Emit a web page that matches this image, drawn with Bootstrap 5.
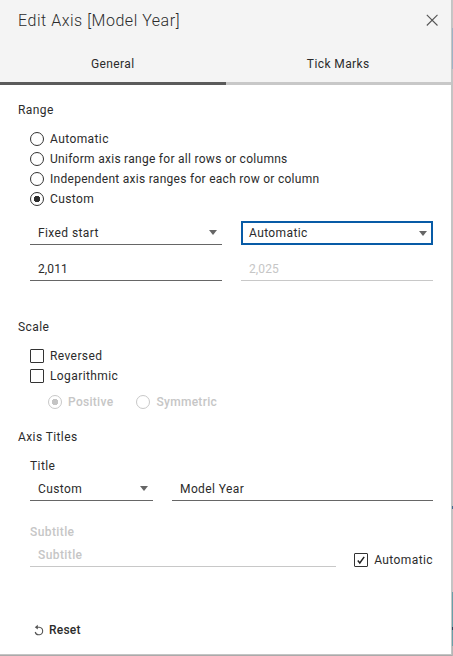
<!DOCTYPE html>
<html lang="en">
<head>
<meta charset="utf-8">
<meta name="viewport" content="width=device-width, initial-scale=1">
<title>Edit Axis [Model Year]</title>
<link href="https://cdn.jsdelivr.net/npm/bootstrap@5.3.0/dist/css/bootstrap.min.css" rel="stylesheet">
<style>
body{width:453px;height:656px;overflow:hidden;background:#c4c4c4;font:400 12px/20px Roboto,"Liberation Sans",sans-serif;letter-spacing:.4px;color:#2b2b2b}
.dialog{width:451px;height:654px;background:#fff}
.backdrop-edge{width:1px;height:656px;margin-left:1px;background:linear-gradient(#c6c6c6 0 28px,#9db3c5 28px 69px,#c4c4c4 69px 506px,#416d91 506px 509px,#c4c4c4 509px 592px,#68a0a9 592px 627px,#24445b 627px 630px,#68a0a9 630px 646px,#b5b5b5 646px)}
.frame{width:453px;height:656px;box-shadow:inset 0 -1px #aaa}
.head{height:85px;background:#f4f4f4}
.head-row{height:45px;padding:0 13px 0 18px}
.heading{font-size:16px;font-weight:300;line-height:20px;letter-spacing:.53px;margin:-4px 0 0}
.close-btn{width:12px;height:12px;margin-top:-5px}
.tab-pane-link{height:40px;border:0;border-bottom:3px solid #c8c8c8;border-radius:0;background:none;padding:0;color:#2b2b2b;letter-spacing:inherit}
.tab-pane-link.active{border-color:#5b5b5b}
.content{padding:15px 18px 0}
.inset{padding-left:12px}
.range-block{padding-top:9px}
.long-text{letter-spacing:.28px}
.form-check{min-height:20px;gap:6px}
.form-check-input{width:14px;height:14px;border:1px solid #333;background-color:#fff}
.form-check-input[type=checkbox]{border-radius:1px}
.form-check-input:checked{background-color:#fff;border-color:#333}
.form-check-input:checked[type=radio]{background-image:radial-gradient(circle,#2b2b2b 2.9px,transparent 3.5px)}
.form-check-input:checked[type=checkbox]{background-image:url("data:image/svg+xml,%3Csvg xmlns='http://www.w3.org/2000/svg' viewBox='0 0 12 12'%3E%3Cpath d='M2.8 6.6l2 2.4L9.2 2.9' fill='none' stroke='%23222' stroke-width='1.5'/%3E%3C/svg%3E")}
.off{color:#c6c6c6;font-weight:500}
.number .off{font-weight:400}
.form-check-input:disabled{opacity:1;border-color:#c8c8c8}
.form-check-input:checked:disabled[type=radio]{background-image:radial-gradient(circle,#c4c4c4 2.9px,transparent 3.5px)}
.form-check-input:disabled~.form-check-label{opacity:1}
.field{height:24px;border-bottom:1px solid #666;padding:0 5px 0 8px}
.field.off{border-color:#c8c8c8}
.field.focused{border:2px solid #085ba6;padding:0 4px 0 6px}
.number{letter-spacing:.1px}
.pair{column-gap:19px}
.scale{margin-top:36px}
.scale-block{padding-top:9px}
.log-kind{padding:6px 0 0 30px;column-gap:23px;letter-spacing:.3px}
.titles{margin-top:15px}
.title-caption{padding:9px 0 1px}
.w-kind{width:123px}.w-sub{width:306px}
.sub-caption{margin-bottom:1px}
.subtitle-row{margin-top:21px}
.auto-title{position:relative;top:3px}
.reset-btn{font-weight:500;border:0;padding:0;line-height:20px;gap:5px;letter-spacing:.2px;margin:53px 0 0 16px;color:#2b2b2b}
</style>
<script src="https://cdn.jsdelivr.net/npm/bootstrap@5.3.0/dist/js/bootstrap.bundle.min.js"></script>
</head>
<body>
<div class="frame d-flex">
<main class="dialog flex-shrink-0">
  <header class="head">
    <div class="head-row d-flex align-items-center justify-content-between">
      <h1 class="heading">Edit Axis [Model Year]</h1>
      <svg class="close-btn" viewBox="0 0 12 12" role="button" aria-label="Close"><path d="M.8.8l10.7 10.7M11.5.8L.8 11.5" stroke="#555" stroke-width="1.1"/></svg>
    </div>
    <div class="d-flex" role="tablist">
      <button class="tab-pane-link active w-50" role="tab">General</button>
      <button class="tab-pane-link w-50" role="tab">Tick Marks</button>
    </div>
  </header>
  <div class="content">
    <div>Range</div>
    <div class="inset range-block">
      <div class="form-check d-flex align-items-center p-0 m-0"><input class="form-check-input m-0 float-none" type="radio" name="range" id="r1"><label class="form-check-label" for="r1">Automatic</label></div>
      <div class="form-check d-flex align-items-center p-0 m-0"><input class="form-check-input m-0 float-none" type="radio" name="range" id="r2"><label class="form-check-label long-text" for="r2">Uniform axis range for all rows or columns</label></div>
      <div class="form-check d-flex align-items-center p-0 m-0"><input class="form-check-input m-0 float-none" type="radio" name="range" id="r3"><label class="form-check-label long-text" for="r3">Independent axis ranges for each row or column</label></div>
      <div class="form-check d-flex align-items-center p-0 m-0"><input class="form-check-input m-0 float-none" type="radio" name="range" id="r4" checked><label class="form-check-label" for="r4">Custom</label></div>
      <div class="pair d-flex mt-2 pt-1">
        <div class="field flex-fill w-50 d-flex align-items-center justify-content-between">Fixed start<svg width="8" height="5"><path d="M0 0h8L4 5z" fill="#666"/></svg></div>
        <div class="field focused flex-fill w-50 d-flex align-items-center justify-content-between">Automatic<svg width="8" height="5"><path d="M0 0h8L4 5z" fill="#666"/></svg></div>
      </div>
      <div class="pair number d-flex mt-2 pt-1">
        <div class="field flex-fill w-50 d-flex align-items-center">2,011</div>
        <div class="field off flex-fill w-50 d-flex align-items-center">2,025</div>
      </div>
    </div>
    <div class="scale">Scale</div>
    <div class="inset scale-block">
      <div class="form-check d-flex align-items-center p-0 m-0"><input class="form-check-input m-0 float-none" type="checkbox" id="c1"><label class="form-check-label" for="c1">Reversed</label></div>
      <div class="form-check d-flex align-items-center p-0 m-0"><input class="form-check-input m-0 float-none" type="checkbox" id="c2"><label class="form-check-label" for="c2">Logarithmic</label></div>
    </div>
    <div class="log-kind d-flex off">
      <div class="form-check d-flex align-items-center p-0 m-0"><input class="form-check-input m-0 float-none" type="radio" name="log" id="l1" checked disabled><label class="form-check-label" for="l1">Positive</label></div>
      <div class="form-check d-flex align-items-center p-0 m-0"><input class="form-check-input m-0 float-none" type="radio" name="log" id="l2" disabled><label class="form-check-label" for="l2">Symmetric</label></div>
    </div>
    <div class="titles">Axis Titles</div>
    <div class="inset">
      <div class="title-caption">Title</div>
      <div class="pair d-flex">
        <div class="field w-kind d-flex align-items-center justify-content-between">Custom<svg width="8" height="5"><path d="M0 0h8L4 5z" fill="#666"/></svg></div>
        <div class="field flex-fill d-flex align-items-center">Model Year</div>
      </div>
      <div class="subtitle-row d-flex justify-content-between align-items-end">
        <div class="w-sub off"><div class="sub-caption">Subtitle</div><div class="field off d-flex align-items-center">Subtitle</div></div>
        <div class="auto-title form-check d-flex align-items-center p-0 m-0"><input class="form-check-input m-0 float-none" type="checkbox" id="c3" checked><label class="form-check-label" for="c3">Automatic</label></div>
      </div>
    </div>
    <button class="reset-btn d-flex align-items-center bg-transparent"><svg width="10" height="12" viewBox="0 0 10 12"><path d="M2 3.2h3.2a3.8 3.8 0 1 1-4 4.8" fill="none" stroke="#555" stroke-width="1.1"/><path d="M.8 3.2L3.8.8v4.8z" fill="#555"/></svg>Reset</button>
  </div>
</main>
<div class="backdrop-edge"></div>
</div>
</body>
</html>
